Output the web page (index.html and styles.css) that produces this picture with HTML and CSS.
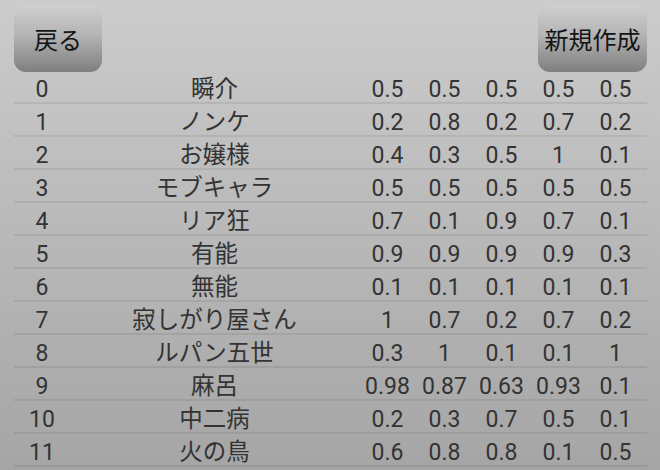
FILE: index.html
```html
<!DOCTYPE html>
<html lang="ja">
<head>
<meta charset="utf-8">
<link rel="stylesheet" href="styles.css">
</head>
<body>
<div class="screen">
  <div class="topbar">
    <div class="btn btn-back">戻る</div>
    <div class="btn btn-new">新規作成</div>
  </div>
  <div class="table">
    <div class="row"><span class="c-id">0</span><span class="c-name">瞬介</span><span class="c-v">0.5</span><span class="c-v">0.5</span><span class="c-v">0.5</span><span class="c-v">0.5</span><span class="c-v">0.5</span></div>
    <div class="row"><span class="c-id">1</span><span class="c-name">ノンケ</span><span class="c-v">0.2</span><span class="c-v">0.8</span><span class="c-v">0.2</span><span class="c-v">0.7</span><span class="c-v">0.2</span></div>
    <div class="row"><span class="c-id">2</span><span class="c-name">お嬢様</span><span class="c-v">0.4</span><span class="c-v">0.3</span><span class="c-v">0.5</span><span class="c-v">1</span><span class="c-v">0.1</span></div>
    <div class="row"><span class="c-id">3</span><span class="c-name">モブキャラ</span><span class="c-v">0.5</span><span class="c-v">0.5</span><span class="c-v">0.5</span><span class="c-v">0.5</span><span class="c-v">0.5</span></div>
    <div class="row"><span class="c-id">4</span><span class="c-name">リア狂</span><span class="c-v">0.7</span><span class="c-v">0.1</span><span class="c-v">0.9</span><span class="c-v">0.7</span><span class="c-v">0.1</span></div>
    <div class="row"><span class="c-id">5</span><span class="c-name">有能</span><span class="c-v">0.9</span><span class="c-v">0.9</span><span class="c-v">0.9</span><span class="c-v">0.9</span><span class="c-v">0.3</span></div>
    <div class="row"><span class="c-id">6</span><span class="c-name">無能</span><span class="c-v">0.1</span><span class="c-v">0.1</span><span class="c-v">0.1</span><span class="c-v">0.1</span><span class="c-v">0.1</span></div>
    <div class="row"><span class="c-id">7</span><span class="c-name">寂しがり屋さん</span><span class="c-v">1</span><span class="c-v">0.7</span><span class="c-v">0.2</span><span class="c-v">0.7</span><span class="c-v">0.2</span></div>
    <div class="row"><span class="c-id">8</span><span class="c-name">ルパン五世</span><span class="c-v">0.3</span><span class="c-v">1</span><span class="c-v">0.1</span><span class="c-v">0.1</span><span class="c-v">1</span></div>
    <div class="row"><span class="c-id">9</span><span class="c-name">麻呂</span><span class="c-v">0.98</span><span class="c-v">0.87</span><span class="c-v">0.63</span><span class="c-v">0.93</span><span class="c-v">0.1</span></div>
    <div class="row"><span class="c-id">10</span><span class="c-name">中二病</span><span class="c-v">0.2</span><span class="c-v">0.3</span><span class="c-v">0.7</span><span class="c-v">0.5</span><span class="c-v">0.1</span></div>
    <div class="row"><span class="c-id">11</span><span class="c-name">火の鳥</span><span class="c-v">0.6</span><span class="c-v">0.8</span><span class="c-v">0.8</span><span class="c-v">0.1</span><span class="c-v">0.5</span></div>
  </div>
</div>
</body>
</html>
```
FILE: styles.css
```css
html, body {
  margin: 0;
  padding: 0;
}
body {
  width: 660px;
  height: 470px;
  overflow: hidden;
  background: linear-gradient(to bottom, #cccccc 0%, #a5a5a5 100%);
  font-family: "Roboto", "Noto Sans CJK JP", sans-serif;
  color: #333333;
}
.screen {
  display: flex;
  flex-direction: column;
}
.topbar {
  display: flex;
  justify-content: space-between;
  padding: 4px 13px 0 14px;
  height: 68px;
}
.btn {
  height: 68px;
  border-radius: 12px;
  background: linear-gradient(to bottom, #d0d0d0 0%, #b4b4b4 45%, #7f7f7f 100%);
  display: flex;
  align-items: center;
  justify-content: center;
  font-size: 24px;
  color: #141414;
  box-sizing: border-box;
}
.btn-back { width: 88px; }
.btn-new { width: 109px; }
.table {
  margin-left: 14px;
  width: 633px;
  margin-top: -1px;
}
.row {
  display: grid;
  grid-template-columns: 56px 289px repeat(5, 57px);
  height: 31px;
  align-items: center;
  border-bottom: 2px solid rgba(0, 0, 0, 0.07);
  font-size: 23px;
}
.row span {
  text-align: center;
  line-height: 31px;
  position: relative;
  top: 2.5px;
  white-space: nowrap;
}
.c-name { font-size: 23.5px; }
```
